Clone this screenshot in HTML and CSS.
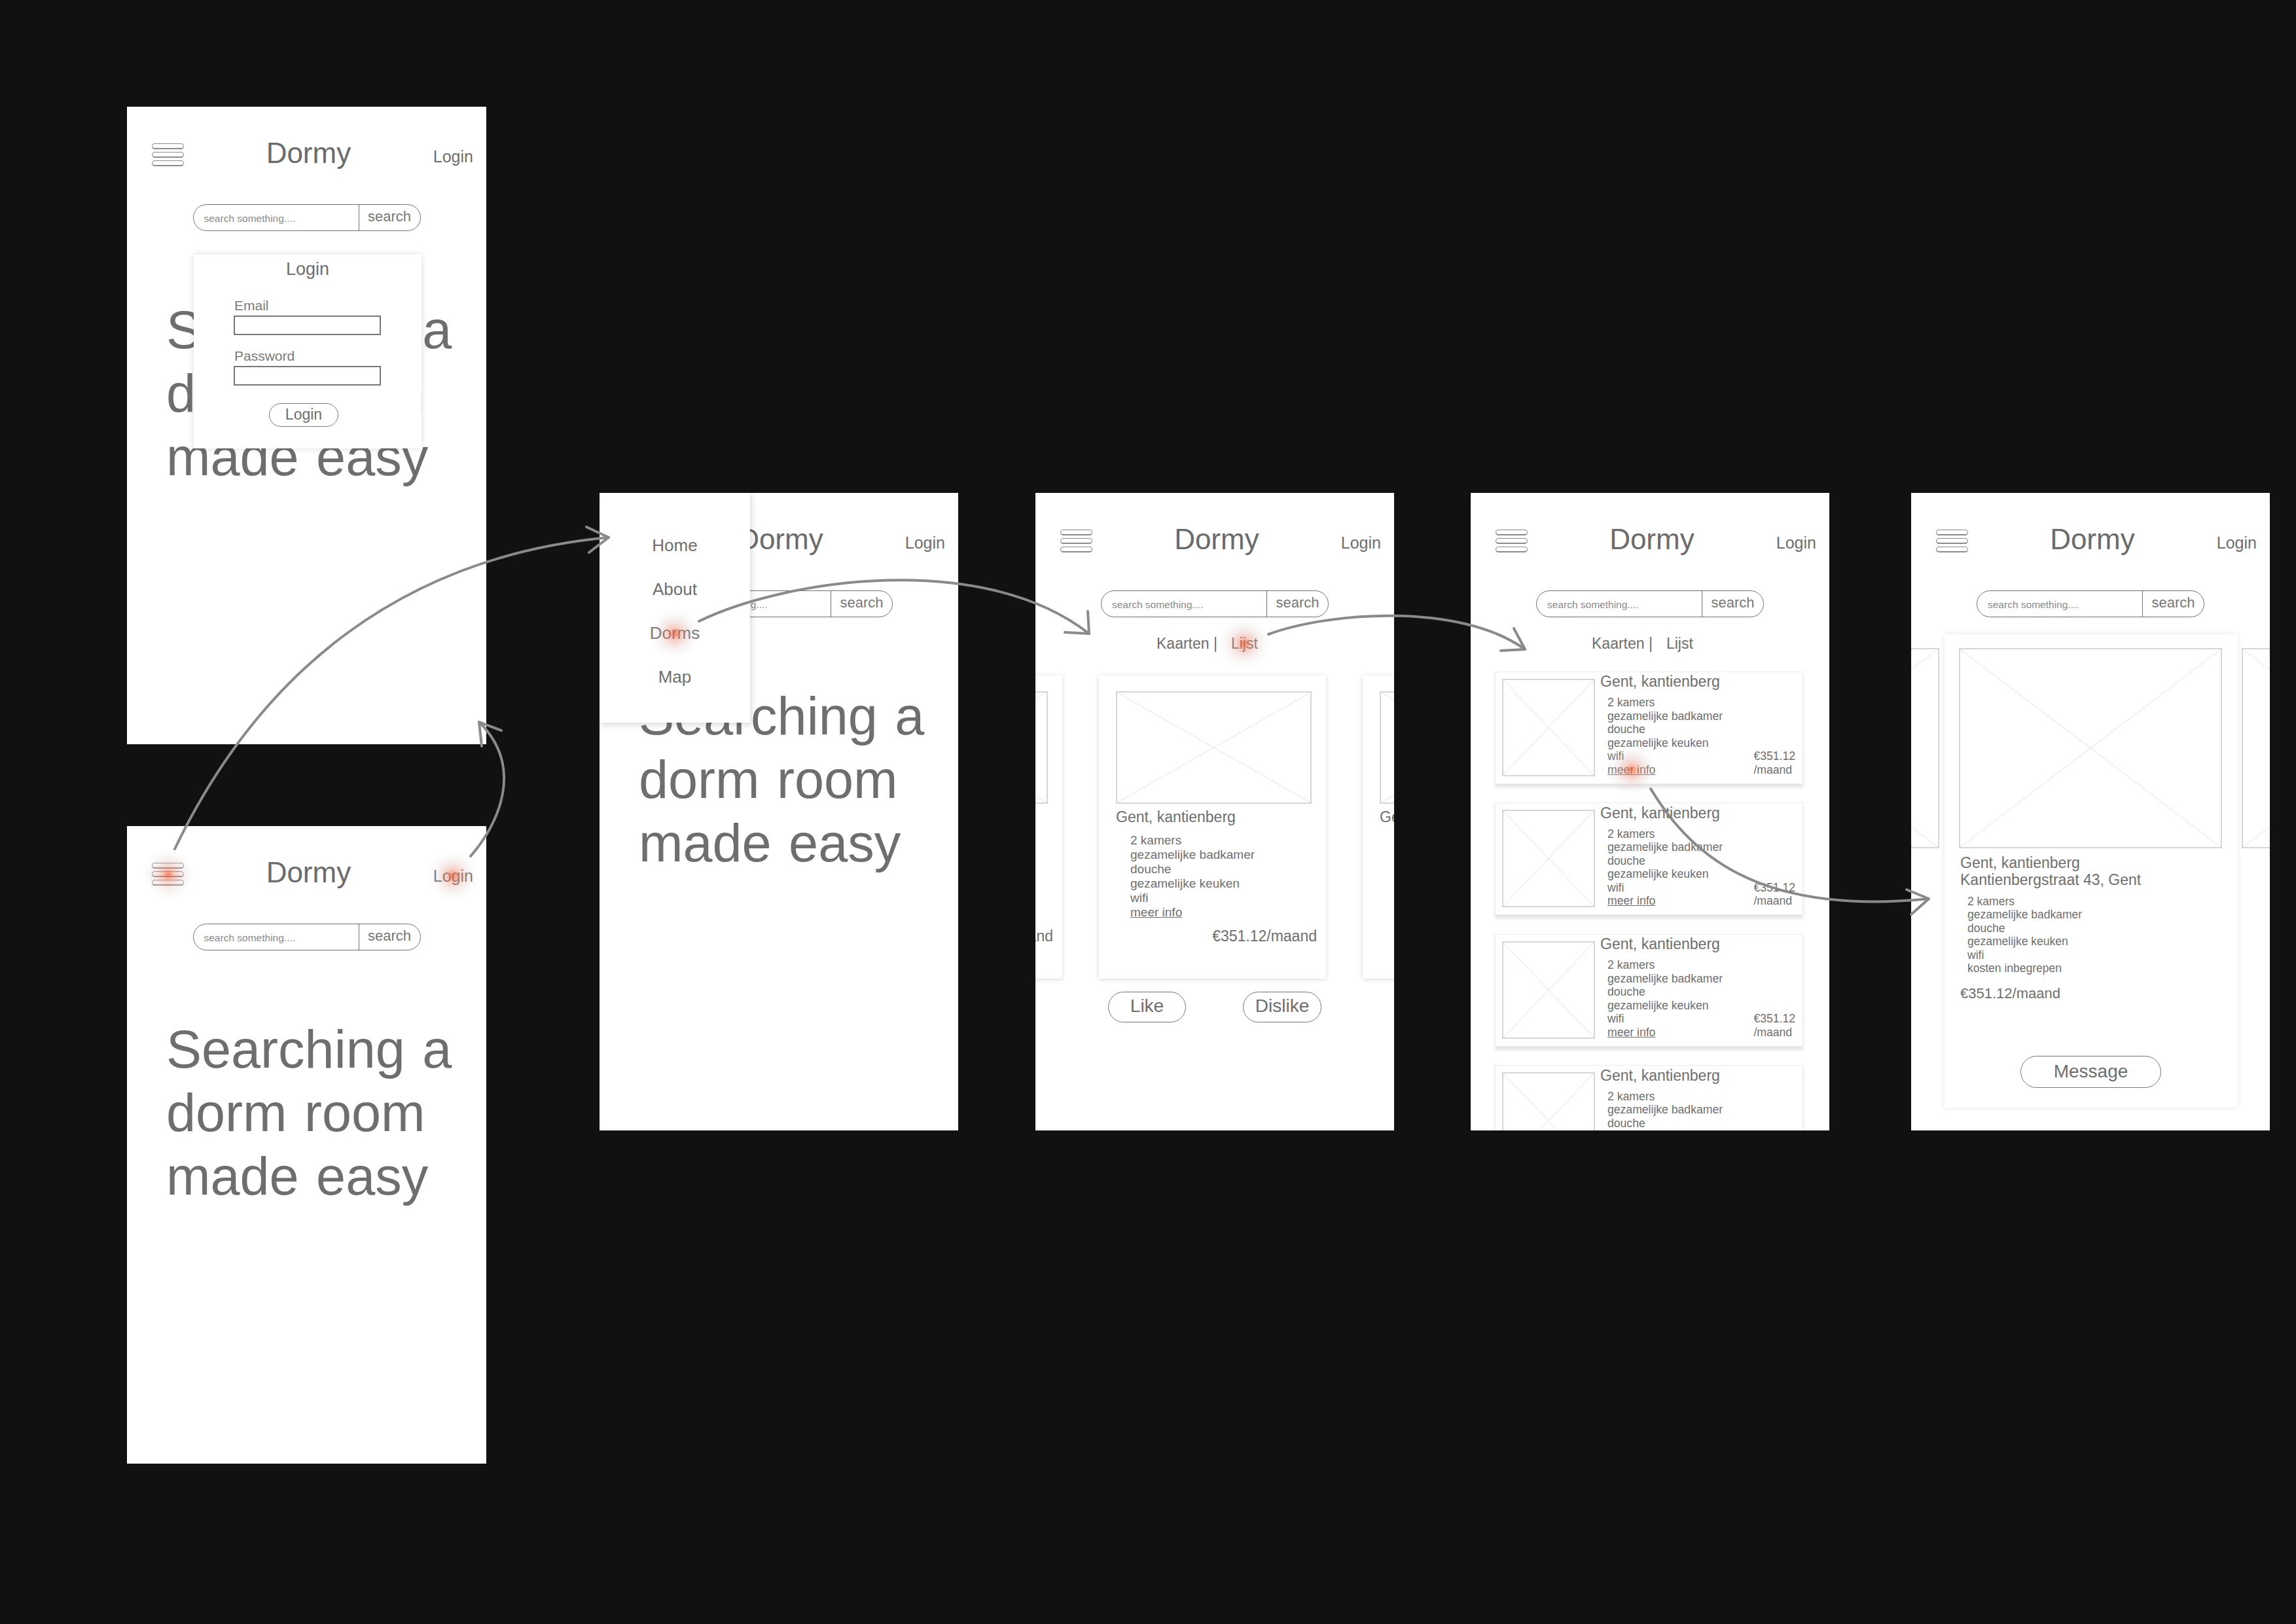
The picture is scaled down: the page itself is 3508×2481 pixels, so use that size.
FILE: index.html
```html
<!DOCTYPE html>
<html lang="nl">
<head>
<meta charset="utf-8">
<title>Dormy wireframes</title>
<link rel="stylesheet" href="styles.css">
</head>
<body>
<div class="canvas">

  <!-- Login popup screen -->
  <section class="screen s-login">
    <header class="hdr">
      <div class="burger"><i></i><i></i><i></i></div>
      <div class="brand">Dormy</div>
      <div class="login-link">Login</div>
    </header>
    <div class="search"><span class="ph">search something....</span><span class="sbtn">search</span></div>
    <h1 class="hero">Searching a<br>dorm room<br>made easy</h1>
    <div class="popup">
      <div class="pop-title">Login</div>
      <div class="form">
        <div class="lbl">Email</div>
        <div class="field"></div>
        <div class="lbl lbl2">Password</div>
        <div class="field"></div>
        <div class="pop-btn">Login</div>
      </div>
    </div>
  </section>

  <!-- Home screen -->
  <section class="screen s-home">
    <header class="hdr">
      <div class="burger hot"><i></i><i></i><i></i></div>
      <div class="brand">Dormy</div>
      <div class="login-link hot">Login</div>
    </header>
    <div class="search"><span class="ph">search something....</span><span class="sbtn">search</span></div>
    <h1 class="hero">Searching a<br>dorm room<br>made easy</h1>
  </section>

  <!-- Menu screen -->
  <section class="screen s-menu">
    <header class="hdr">
      <div class="burger"><i></i><i></i><i></i></div>
      <div class="brand">Dormy</div>
      <div class="login-link">Login</div>
    </header>
    <div class="search"><span class="ph">search something....</span><span class="sbtn">search</span></div>
    <h1 class="hero">Searching a<br>dorm room<br>made easy</h1>
    <nav class="menu">
      <span>Home</span>
      <span>About</span>
      <span class="hot">Dorms</span>
      <span>Map</span>
    </nav>
  </section>

  <!-- Cards screen -->
  <section class="screen s-cards">
    <header class="hdr">
      <div class="burger"><i></i><i></i><i></i></div>
      <div class="brand">Dormy</div>
      <div class="login-link">Login</div>
    </header>
    <div class="search"><span class="ph">search something....</span><span class="sbtn">search</span></div>
    <div class="tabs"><span>Kaarten |</span><span class="tab2 hot">Lijst</span></div>
    <div class="carousel">
      <article class="card">
        <svg class="ph-img c-img" viewBox="0 0 100 100" preserveAspectRatio="none"><line x1="0" y1="0" x2="100" y2="100"/><line x1="100" y1="0" x2="0" y2="100"/></svg>
        <div class="c-title">Gent, kantienberg</div>
        <ul class="c-feat"><li>2 kamers</li><li>gezamelijke badkamer</li><li>douche</li><li>gezamelijke keuken</li><li>wifi</li><li><u>meer info</u></li></ul>
        <div class="c-price">€351.12/maand</div>
      </article>
      <article class="card">
        <svg class="ph-img c-img" viewBox="0 0 100 100" preserveAspectRatio="none"><line x1="0" y1="0" x2="100" y2="100"/><line x1="100" y1="0" x2="0" y2="100"/></svg>
        <div class="c-title">Gent, kantienberg</div>
        <ul class="c-feat"><li>2 kamers</li><li>gezamelijke badkamer</li><li>douche</li><li>gezamelijke keuken</li><li>wifi</li><li><u>meer info</u></li></ul>
        <div class="c-price">€351.12/maand</div>
      </article>
      <article class="card">
        <svg class="ph-img c-img" viewBox="0 0 100 100" preserveAspectRatio="none"><line x1="0" y1="0" x2="100" y2="100"/><line x1="100" y1="0" x2="0" y2="100"/></svg>
        <div class="c-title">Gent, kantienberg</div>
        <ul class="c-feat"><li>2 kamers</li><li>gezamelijke badkamer</li><li>douche</li><li>gezamelijke keuken</li><li>wifi</li><li><u>meer info</u></li></ul>
        <div class="c-price">€351.12/maand</div>
      </article>
    </div>
    <div class="vote"><span class="pill">Like</span><span class="pill pill-wide">Dislike</span></div>
  </section>

  <!-- List screen -->
  <section class="screen s-list">
    <header class="hdr">
      <div class="burger"><i></i><i></i><i></i></div>
      <div class="brand">Dormy</div>
      <div class="login-link">Login</div>
    </header>
    <div class="search"><span class="ph">search something....</span><span class="sbtn">search</span></div>
    <div class="tabs"><span>Kaarten |</span><span class="tab2">Lijst</span></div>
    <div class="list">
      <div class="item">
        <svg class="ph-img thumb" viewBox="0 0 100 100" preserveAspectRatio="none"><line x1="0" y1="0" x2="100" y2="100"/><line x1="100" y1="0" x2="0" y2="100"/></svg>
        <div class="info">
          <div class="i-title">Gent, kantienberg</div>
          <ul class="i-feat"><li>2 kamers</li><li>gezamelijke badkamer</li><li>douche</li><li>gezamelijke keuken</li><li>wifi</li><li><u class="hot">meer info</u></li></ul>
        </div>
        <div class="i-price">€351.12<br>/maand</div>
      </div>
      <div class="item">
        <svg class="ph-img thumb" viewBox="0 0 100 100" preserveAspectRatio="none"><line x1="0" y1="0" x2="100" y2="100"/><line x1="100" y1="0" x2="0" y2="100"/></svg>
        <div class="info">
          <div class="i-title">Gent, kantienberg</div>
          <ul class="i-feat"><li>2 kamers</li><li>gezamelijke badkamer</li><li>douche</li><li>gezamelijke keuken</li><li>wifi</li><li><u>meer info</u></li></ul>
        </div>
        <div class="i-price">€351.12<br>/maand</div>
      </div>
      <div class="item">
        <svg class="ph-img thumb" viewBox="0 0 100 100" preserveAspectRatio="none"><line x1="0" y1="0" x2="100" y2="100"/><line x1="100" y1="0" x2="0" y2="100"/></svg>
        <div class="info">
          <div class="i-title">Gent, kantienberg</div>
          <ul class="i-feat"><li>2 kamers</li><li>gezamelijke badkamer</li><li>douche</li><li>gezamelijke keuken</li><li>wifi</li><li><u>meer info</u></li></ul>
        </div>
        <div class="i-price">€351.12<br>/maand</div>
      </div>
      <div class="item">
        <svg class="ph-img thumb" viewBox="0 0 100 100" preserveAspectRatio="none"><line x1="0" y1="0" x2="100" y2="100"/><line x1="100" y1="0" x2="0" y2="100"/></svg>
        <div class="info">
          <div class="i-title">Gent, kantienberg</div>
          <ul class="i-feat"><li>2 kamers</li><li>gezamelijke badkamer</li><li>douche</li><li>gezamelijke keuken</li><li>wifi</li><li><u>meer info</u></li></ul>
        </div>
        <div class="i-price">€351.12<br>/maand</div>
      </div>
    </div>
  </section>

  <!-- Detail screen -->
  <section class="screen s-detail">
    <header class="hdr">
      <div class="burger"><i></i><i></i><i></i></div>
      <div class="brand">Dormy</div>
      <div class="login-link">Login</div>
    </header>
    <div class="search"><span class="ph">search something....</span><span class="sbtn">search</span></div>
    <div class="stage">
      <div class="strip">
        <svg class="ph-img d-img" viewBox="0 0 100 100" preserveAspectRatio="none"><line x1="0" y1="0" x2="100" y2="100"/><line x1="100" y1="0" x2="0" y2="100"/></svg>
        <svg class="ph-img d-img" viewBox="0 0 100 100" preserveAspectRatio="none"><line x1="0" y1="0" x2="100" y2="100"/><line x1="100" y1="0" x2="0" y2="100"/></svg>
        <svg class="ph-img d-img" viewBox="0 0 100 100" preserveAspectRatio="none"><line x1="0" y1="0" x2="100" y2="100"/><line x1="100" y1="0" x2="0" y2="100"/></svg>
      </div>
      <article class="dcard">
        <svg class="ph-img d-img" viewBox="0 0 100 100" preserveAspectRatio="none"><line x1="0" y1="0" x2="100" y2="100"/><line x1="100" y1="0" x2="0" y2="100"/></svg>
        <div class="d-title">Gent, kantienberg<br>Kantienbergstraat 43, Gent</div>
        <ul class="d-feat"><li>2 kamers</li><li>gezamelijke badkamer</li><li>douche</li><li>gezamelijke keuken</li><li>wifi</li><li>kosten inbegrepen</li></ul>
        <div class="d-price">€351.12/maand</div>
        <div class="pill msg">Message</div>
      </article>
    </div>
  </section>

  <svg class="arrows" viewBox="0 0 3508 2481" width="3508" height="2481">
    <path d="M267,1297 C400,1020 620,850 930,821"/>
    <path d="M896,805 L930,821 L900,844"/>
    <path d="M719,1308 C765,1255 800,1170 732,1103"/>
    <path d="M736,1140 L732,1103 L766,1116"/>
    <path d="M1068,949 C1200,885 1500,840 1664,968"/>
    <path d="M1662,934 L1664,968 L1627,966"/>
    <path d="M1938,969 C2030,935 2230,920 2330,992"/>
    <path d="M2313,960 L2330,992 L2293,994"/>
    <path d="M2522,1205 C2580,1300 2680,1400 2947,1373"/>
    <path d="M2913,1359 L2947,1373 L2920,1397"/>
  </svg>
</div>
</body>
</html>
```

FILE: styles.css
```css
html, body {
  margin: 0;
  padding: 0;
  background: #111111;
}

.canvas {
  position: relative;
  width: 3508px;
  height: 2481px;
  background: #111111;
  overflow: hidden;
  font-family: "Liberation Sans", Arial, Helvetica, sans-serif;
  color: #6e6e6e;
}

/* ---------- screens (nodes of the storyboard) ---------- */
.screen {
  position: absolute;
  width: 548px;
  height: 974px;
  background: #ffffff;
  overflow: hidden;
  display: flex;
  flex-direction: column;
}
.s-login  { left: 194px;  top: 163px; width: 549px; }
.s-home   { left: 194px;  top: 1262px; width: 549px; }
.s-menu   { left: 916px;  top: 753px; }
.s-cards  { left: 1582px; top: 753px; }
.s-list   { left: 2247px; top: 753px; }
.s-detail { left: 2920px; top: 753px; }

/* ---------- header ---------- */
.hdr {
  display: flex;
  justify-content: space-between;
  align-items: flex-start;
  padding: 45.5px 20px 0 38px;
  flex: none;
}
.burger {
  margin-top: 10.5px;
  display: flex;
  flex-direction: column;
  gap: 4px;
}
.burger i {
  display: block;
  width: 49px;
  height: 9px;
  border: 1.5px solid #8c8c8c;
  border-bottom-width: 2px;
  border-radius: 5px;
  box-sizing: border-box;
}
.brand {
  font-size: 44px;
  line-height: 50px;
  color: #6b6b6b;
}
.login-link {
  font-size: 25px;
  line-height: 30px;
  margin-top: 15px;
}

/* ---------- search ---------- */
.search {
  flex: none;
  display: flex;
  width: 348px;
  height: 41px;
  margin: 53.5px auto 0;
  border: 1.5px solid #707070;
  border-radius: 21px;
  box-sizing: border-box;
}
.ph {
  flex: 1;
  display: flex;
  align-items: center;
  padding: 3px 0 0 16px;
  font-size: 15.5px;
  color: #8a8a8a;
}
.sbtn {
  width: 94px;
  border-left: 1.5px solid #707070;
  display: flex;
  align-items: center;
  justify-content: center;
  padding-bottom: 3px;
  box-sizing: border-box;
  font-size: 22px;
  color: #777;
}

/* ---------- hero ---------- */
.hero {
  margin: 102.75px 0 0 60px;
  font-size: 81px;
  line-height: 97px;
  font-weight: normal;
  word-spacing: 4px;
  color: #6e6e6e;
}

/* ---------- login popup ---------- */
.popup {
  position: absolute;
  left: 102px;
  top: 226px;
  width: 348px;
  height: 296px;
  background: #fff;
  box-shadow: 0 0 10px rgba(0, 0, 0, 0.14);
}
.pop-title {
  margin-top: 7.4px;
  text-align: center;
  font-size: 27px;
  line-height: 30px;
}
.form {
  padding-left: 61px;
  margin-top: 29px;
}
.lbl {
  font-size: 21px;
  line-height: 24px;
  margin-left: 1px;
  color: #7a7a7a;
}
.lbl2 { margin-top: 20.5px; }
.field {
  width: 225px;
  height: 30px;
  margin-top: 2.6px;
  border: 2px solid #777;
  box-sizing: border-box;
}
.pop-btn {
  width: 106px;
  height: 36px;
  margin: 27px 0 0 54px;
  border: 1.5px solid #777;
  border-radius: 18px;
  box-sizing: border-box;
  display: flex;
  align-items: center;
  justify-content: center;
  font-size: 23px;
  padding-bottom: 2px;
}

/* ---------- slide-in menu ---------- */
.menu {
  position: absolute;
  left: 0;
  top: 0;
  width: 230px;
  height: 351px;
  padding-top: 47px;
  box-sizing: border-box;
  background: #fff;
  box-shadow: 2px 3px 9px rgba(0, 0, 0, 0.16);
  display: flex;
  flex-direction: column;
  align-items: center;
  font-size: 26px;
  line-height: 67px;
}

/* ---------- tabs ---------- */
.tabs {
  flex: none;
  display: flex;
  padding-left: 185px;
  margin-top: 26.4px;
  font-size: 23px;
  line-height: 28px;
}
.tab2 { margin-left: 21px; }

/* ---------- placeholder image ---------- */
.ph-img {
  display: block;
  flex: none;
  box-sizing: border-box;
  border: 2px solid #d6d6d6;
  background: #fff;
}
.ph-img line {
  stroke: #e2e2e2;
  stroke-width: 1;
  vector-effect: non-scaling-stroke;
}

/* ---------- cards carousel ---------- */
.carousel {
  flex: none;
  display: flex;
  gap: 56px;
  margin: 34.6px 0 0 -306px;
}
.card {
  flex: none;
  width: 347px;
  height: 463px;
  padding: 24px 14px 0 26px;
  box-sizing: border-box;
  background: #fff;
  box-shadow: 0 1px 7px rgba(0, 0, 0, 0.17);
  display: flex;
  flex-direction: column;
}
.c-img { width: 299px; height: 172px; }
.c-title {
  margin-top: 6.9px;
  font-size: 23px;
  line-height: 26px;
}
ul { list-style: none; margin: 0; padding: 0; }
.c-feat {
  margin: 12.3px 0 0 22px;
  font-size: 19px;
  line-height: 22px;
}
.c-price {
  margin-top: 12.2px;
  text-align: right;
  font-size: 23px;
  line-height: 26px;
}
.vote {
  flex: none;
  display: flex;
  gap: 87px;
  padding-left: 111px;
  margin-top: 20px;
}
.pill {
  width: 119px;
  height: 47px;
  border: 1.5px solid #777;
  border-radius: 24px;
  box-sizing: border-box;
  display: flex;
  align-items: center;
  justify-content: center;
  font-size: 28px;
  padding-bottom: 2px;
}
.pill-wide { width: 120px; }

/* ---------- list ---------- */
.list {
  flex: none;
  display: flex;
  flex-direction: column;
  gap: 28.5px;
  width: 471px;
  margin: 28.6px 0 0 37px;
}
.item {
  flex: none;
  height: 172px;
  display: flex;
  padding: 0 11px 0 10px;
  box-sizing: border-box;
  background: #fff;
  border: 1px solid #ececec;
  box-shadow: 0 5px 5px rgba(0, 0, 0, 0.11);
}
.thumb {
  width: 142px;
  height: 149px;
  margin-top: 10px;
}
.info {
  flex: 1;
  margin-left: 8px;
  padding-top: 1.4px;
}
.i-title {
  font-size: 23px;
  line-height: 26px;
}
.i-feat {
  margin: 9.1px 0 0 11px;
  font-size: 17.6px;
  line-height: 20.5px;
}
.i-price {
  align-self: flex-end;
  margin-bottom: 10.5px;
  font-size: 17.6px;
  line-height: 20.5px;
}

/* ---------- detail ---------- */
.stage {
  flex: none;
  display: grid;
  margin-top: 26px;
  height: 723px;
}
.strip {
  grid-area: 1 / 1;
  align-self: start;
  width: max-content;
  display: flex;
  gap: 30px;
  margin-left: -359px;
  padding-top: 21px;
}
.d-img { width: 402px; height: 306px; }
.dcard {
  grid-area: 1 / 1;
  z-index: 1;
  width: 448px;
  height: 723px;
  margin-left: 51px;
  padding: 21px 0 0 22px;
  box-sizing: border-box;
  background: #fff;
  box-shadow: 0 0 8px rgba(0, 0, 0, 0.11);
  display: flex;
  flex-direction: column;
}
.d-title {
  margin: 8.5px 0 0 2px;
  font-size: 23px;
  line-height: 26.5px;
}
.d-feat {
  margin: 9px 0 0 13px;
  font-size: 17.5px;
  line-height: 20.5px;
}
.d-price {
  margin: 15px 0 0 2px;
  font-size: 22px;
  line-height: 26px;
}
.msg {
  width: 215px;
  height: 49px;
  border-radius: 25px;
  margin: 82.5px 0 0 94px;
}

/* ---------- tap highlights ---------- */
.hot { position: relative; }
.hot::after {
  content: "";
  position: absolute;
  left: 50%;
  top: 50%;
  width: 80px;
  height: 78px;
  margin: -39px 0 0 -40px;
  border-radius: 50%;
  background: radial-gradient(closest-side,
    rgba(240, 100, 60, 0.78) 0%,
    rgba(238, 135, 110, 0.42) 24%,
    rgba(218, 184, 180, 0.26) 52%,
    rgba(225, 218, 218, 0.13) 78%,
    rgba(255, 255, 255, 0) 100%);
  pointer-events: none;
}

/* ---------- flow arrows ---------- */
.arrows {
  position: absolute;
  left: 0;
  top: 0;
  pointer-events: none;
  z-index: 5;
}
.arrows path {
  fill: none;
  stroke: #8a8a8a;
  stroke-width: 4;
  stroke-linecap: round;
  stroke-linejoin: round;
}
```
